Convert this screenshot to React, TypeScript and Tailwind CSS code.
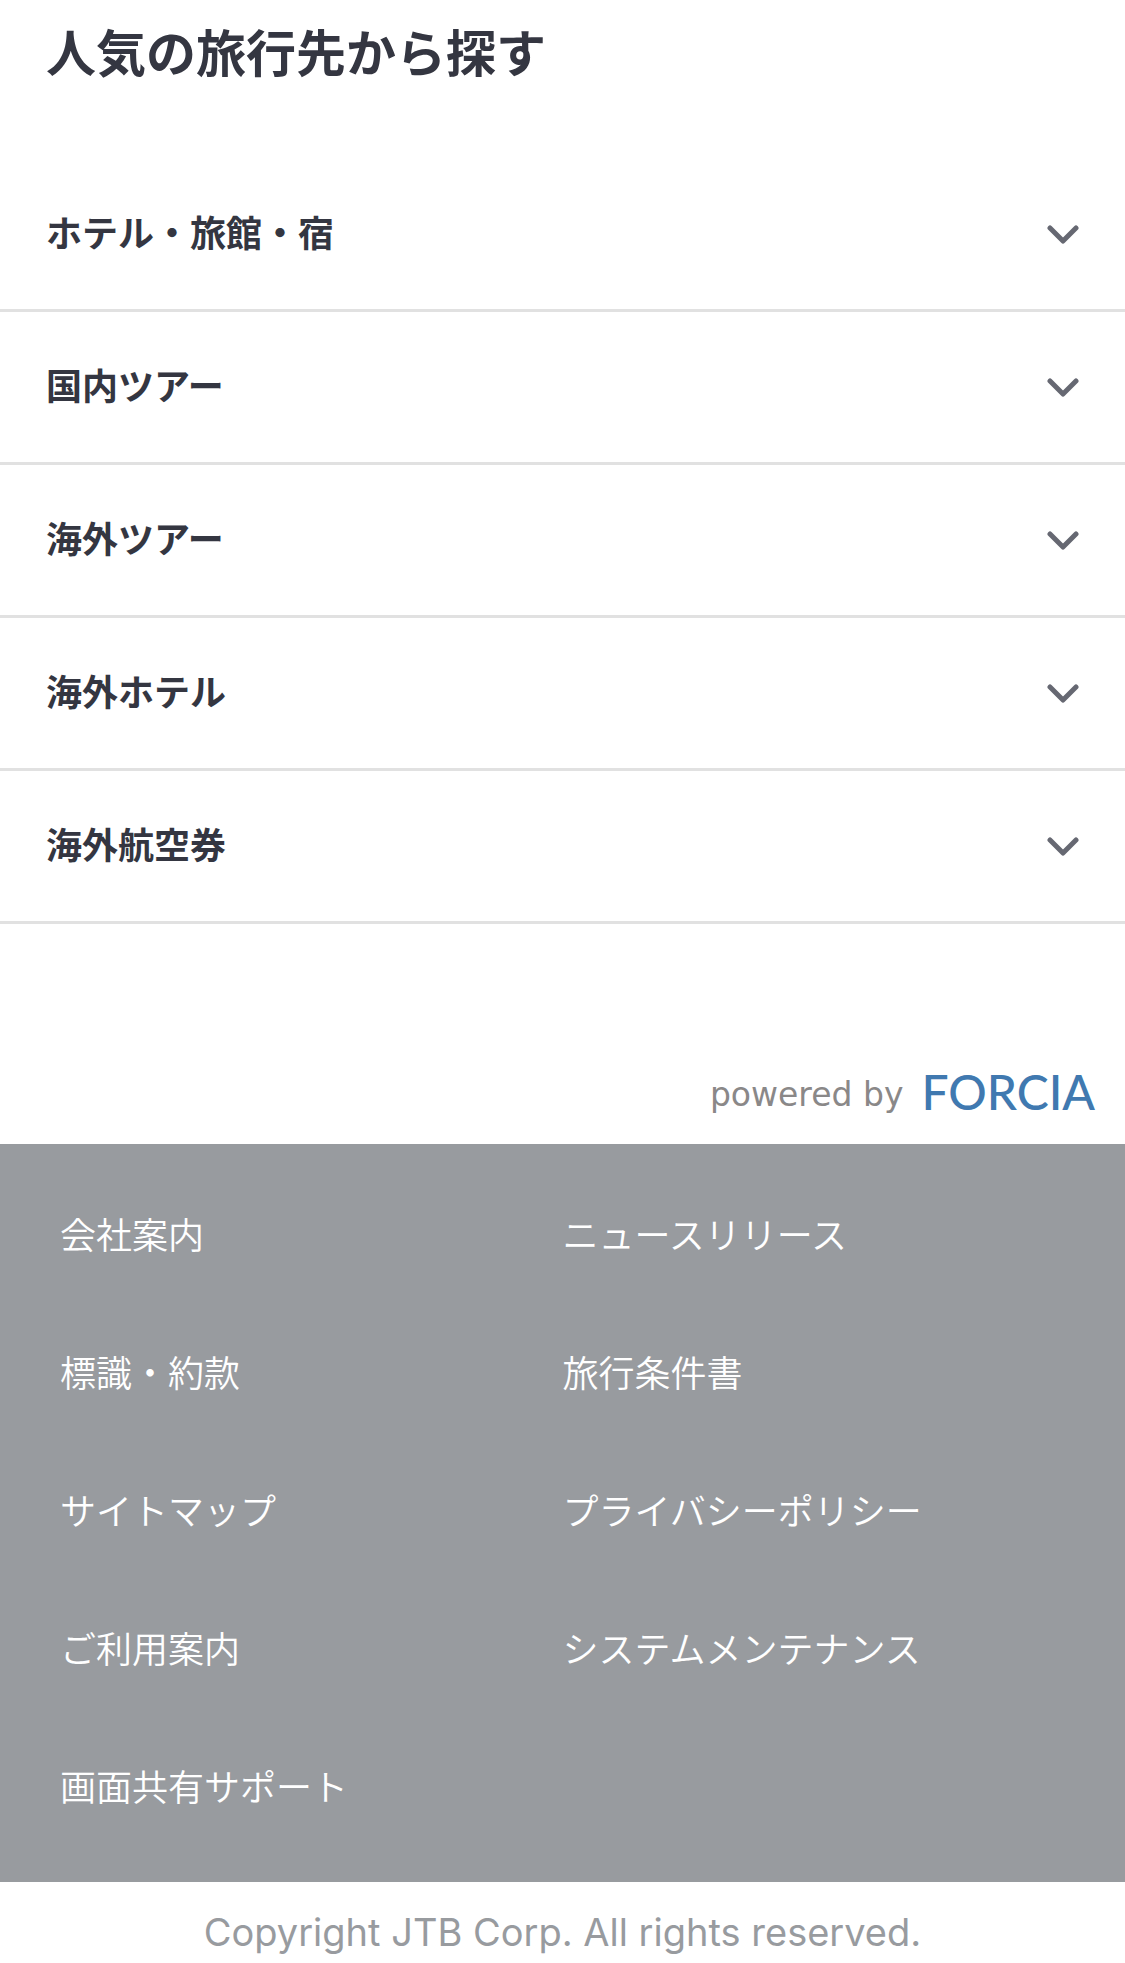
const sections = ["ホテル・旅館・宿", "国内ツアー", "海外ツアー", "海外ホテル", "海外航空券"];
const links = [
  "会社案内", "ニュースリリース",
  "標識・約款", "旅行条件書",
  "サイトマップ", "プライバシーポリシー",
  "ご利用案内", "システムメンテナンス",
  "画面共有サポート",
];

export default function App() {
  return (
    <div className="bg-white font-['Noto_Sans_CJK_JP',sans-serif] text-[#343641]">
      <main>
        <h2 className="px-[46px] pt-[14px] text-[50px] leading-[72px] font-bold">人気の旅行先から探す</h2>
        <ul className="pt-[73px]">
          {sections.map((s) => (
            <li key={s} className="border-b-3 border-[#e1e1e1]">
              <button type="button" className="flex h-[150px] w-full items-center justify-between px-[46px] pt-[2px] text-left text-[36px] font-bold">
                <span className="pb-[8px]">{s}</span>
                <svg className="h-[20px] w-[32px]" viewBox="0 0 32 20" fill="none" stroke="#666872" strokeWidth="5" strokeLinecap="round" strokeLinejoin="round" aria-hidden="true">
                  <path d="M3 3L16 16L29 3" />
                </svg>
              </button>
            </li>
          ))}
        </ul>
        <div className="flex items-center justify-end gap-[18px] px-[30px] pt-[140px] pb-[24px] leading-[56px]">
          <span className="pt-[6px] font-['DejaVu_Sans',sans-serif] text-[33px] leading-[50px] text-[#8a8888]">powered by</span>
          <span className="font-['Lato',sans-serif] text-[48px] font-medium text-[#4079b0]">FORCIA</span>
        </div>
      </main>
      <footer>
        <nav className="bg-[#989b9f] px-[60px] pt-[20px] pb-[28px]">
          <ul className="grid grid-cols-2 text-[36px] text-white">
            {links.map((l) => (
              <li key={l}>
                <a href="#" className="flex h-[138px] items-center font-[350]">{l}</a>
              </li>
            ))}
          </ul>
        </nav>
        <p className="pt-[23px] text-center font-['Inter',sans-serif] text-[38px] leading-[54px] text-[#989b9f]">Copyright JTB Corp. All rights reserved.</p>
      </footer>
    </div>
  );
}
